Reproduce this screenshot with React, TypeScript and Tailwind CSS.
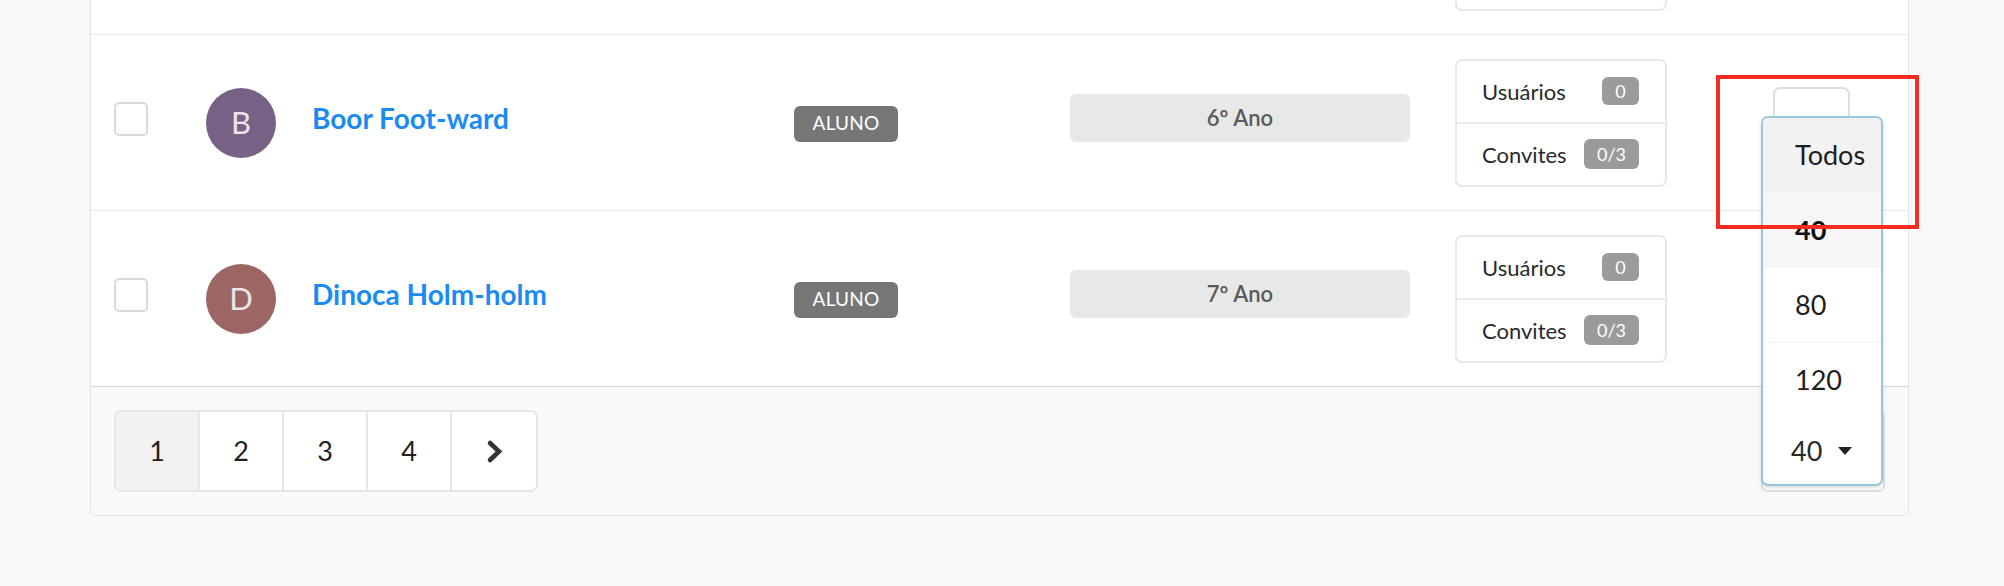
import React from "react";

interface Student {
  initial: string;
  name: string;
  color: string;
  grade: string;
  users: string;
  invites: string;
}

const students: Student[] = [
  { initial: "B", name: "Boor Foot-ward", color: "bg-[#776184]", grade: "6º Ano", users: "0", invites: "0/3" },
  { initial: "D", name: "Dinoca Holm-holm", color: "bg-[#9c6664]", grade: "7º Ano", users: "0", invites: "0/3" },
];

function StudentRow({ s, last }: { s: Student; last: boolean }) {
  return (
    <div
      className={`flex items-center h-[176px] bg-white border-b ${
        last ? "border-[#d9d9da]" : "border-[#e9e9e9]"
      }`}
    >
      {/* checkbox */}
      <div className="w-[115px] pl-[23px] shrink-0 mb-[8px]">
        <div className="w-[34px] h-[34px] rounded-[5px] border-2 border-[#dadada] bg-white" />
      </div>

      {/* avatar + name */}
      <div
        className={`w-[70px] h-[70px] rounded-full ${s.color} shrink-0 flex items-center justify-center text-[31px] text-[#ebe4ea]`}
      >
        {s.initial}
      </div>
      <div className="w-[518px] pl-[36px] shrink-0 mb-[6px]">
        <a className="text-[28px] font-bold text-[#1b8bf2] leading-none cursor-pointer">{s.name}</a>
      </div>

      {/* role */}
      <div className="w-[276px] shrink-0 mt-[2px]">
        <span className="inline-flex items-center justify-center w-[104px] h-[36px] rounded-[6px] bg-[#767676] text-white text-[19px] tracking-[0.2px]">
          ALUNO
        </span>
      </div>

      {/* class */}
      <div className="w-[340px] h-[48px] shrink-0 mb-[10px] rounded-[6px] bg-[#e8e8e8] flex items-center justify-center text-[22px] font-semibold text-[#5a5a5a]">
        {s.grade}
      </div>

      {/* stats card */}
      <StatsCard users={s.users} invites={s.invites} />

      {/* actions */}
      <div className="ml-[106px] w-[77px] h-[72px] shrink-0 rounded-[7px] border-2 border-[#dedede] bg-white" />
    </div>
  );
}

function StatsCard({ users, invites }: { users: string; invites: string }) {
  return (
    <div className="ml-[45px] w-[212px] h-[128px] shrink-0 rounded-[7px] border-2 border-[#e8e8e8] bg-white flex flex-col">
      <div className="flex-1 flex items-center justify-between pl-[25px] pr-[26px] border-b-2 border-[#ececec]">
        <span className="text-[22px] text-[#2a2a2a]">Usuários</span>
        <span className="inline-flex items-center justify-center w-[37px] h-[28px] rounded-[6px] bg-[#9b9b9b] text-white text-[18px]">
          {users}
        </span>
      </div>
      <div className="flex-1 flex items-center justify-between pl-[25px] pr-[26px]">
        <span className="text-[22px] text-[#2a2a2a]">Convites</span>
        <span className="inline-flex items-center justify-center w-[55px] h-[30px] rounded-[6px] bg-[#9b9b9b] text-white text-[18px]">
          {invites}
        </span>
      </div>
    </div>
  );
}

export default function App() {
  const pages = ["1", "2", "3", "4"];
  const options = ["Todos", "40", "80", "120"];

  return (
    <div
      className="relative w-full h-[586px] overflow-hidden bg-[#f8f8f8]"
      style={{ fontFamily: "Lato, 'Noto Sans', sans-serif" }}
    >
      <div className="ml-[90px] w-[1819px] rounded-b-[6px] border border-t-0 border-[#e4e4e4] overflow-hidden">
        {/* tail of the previous row, scrolled out of view */}
        <div className="h-[35px] flex items-start bg-white border-b border-[#e9e9e9]">
          <div className="ml-[1364px] w-[212px] h-[11px] rounded-b-[7px] border-2 border-t-0 border-[#e8e8e8]" />
        </div>

        {students.map((s, i) => (
          <StudentRow key={s.name} s={s} last={i === students.length - 1} />
        ))}

        {/* footer */}
        <div className="flex items-center justify-between px-[23px] py-[23px] bg-[#f8f9fa]">
          <div className="flex h-[82px] rounded-[7px] border-2 border-[#e6e6e6] overflow-hidden bg-white">
            {pages.map((p, i) => (
              <div
                key={p}
                className={`w-[84px] flex items-center justify-center text-[27px] text-[#222] border-r-2 border-[#e6e6e6] ${
                  i === 0 ? "bg-[#f2f2f2]" : "bg-white"
                }`}
              >
                {p}
              </div>
            ))}
            <div className="w-[84px] flex items-center justify-center">
              <svg width="17" height="25" viewBox="0 0 17 25">
                <polyline
                  points="4,4 13,12.5 4,21"
                  fill="none"
                  stroke="#333"
                  strokeWidth="4.6"
                  strokeLinecap="round"
                  strokeLinejoin="miter"
                />
              </svg>
            </div>
          </div>

          {/* per-page select, opened upward */}
          <div className="relative w-[124px] h-[82px] rounded-[6px] border-2 border-[#e0e0e0] bg-white">
            <div className="absolute left-[-2px] bottom-[4px] w-[122px] h-[370px] z-10 rounded-[7px] border-2 border-[#96c8da] bg-white shadow-[0_2px_4px_rgba(34,36,38,0.15)] flex flex-col overflow-hidden text-[27px] text-[#1e1e1e]">
              {options.map((o, i) => (
                <div
                  key={o}
                  className={`h-[75px] shrink-0 flex items-center pl-[32px] ${
                    i === 0 ? "bg-[#f2f2f2]" : i === 1 ? "bg-[#f6f6f6] font-bold text-[#111]" : "bg-white"
                  } ${i === 2 ? "border-b border-[#f4f4f4]" : ""}`}
                >
                  {o}
                </div>
              ))}
              <div className="flex-1 flex items-center pl-[28px] gap-[16px] text-[#2a2a2a]">
                <span>40</span>
                <svg width="14" height="8" viewBox="0 0 14 8">
                  <polygon points="0,0 14,0 7,8" fill="#222" />
                </svg>
              </div>
            </div>
          </div>
        </div>
      </div>

      {/* annotation box */}
      <div className="absolute left-[1716px] top-[75px] w-[203px] h-[154px] border-4 border-[#f82b20] z-20 pointer-events-none" />
    </div>
  );
}
